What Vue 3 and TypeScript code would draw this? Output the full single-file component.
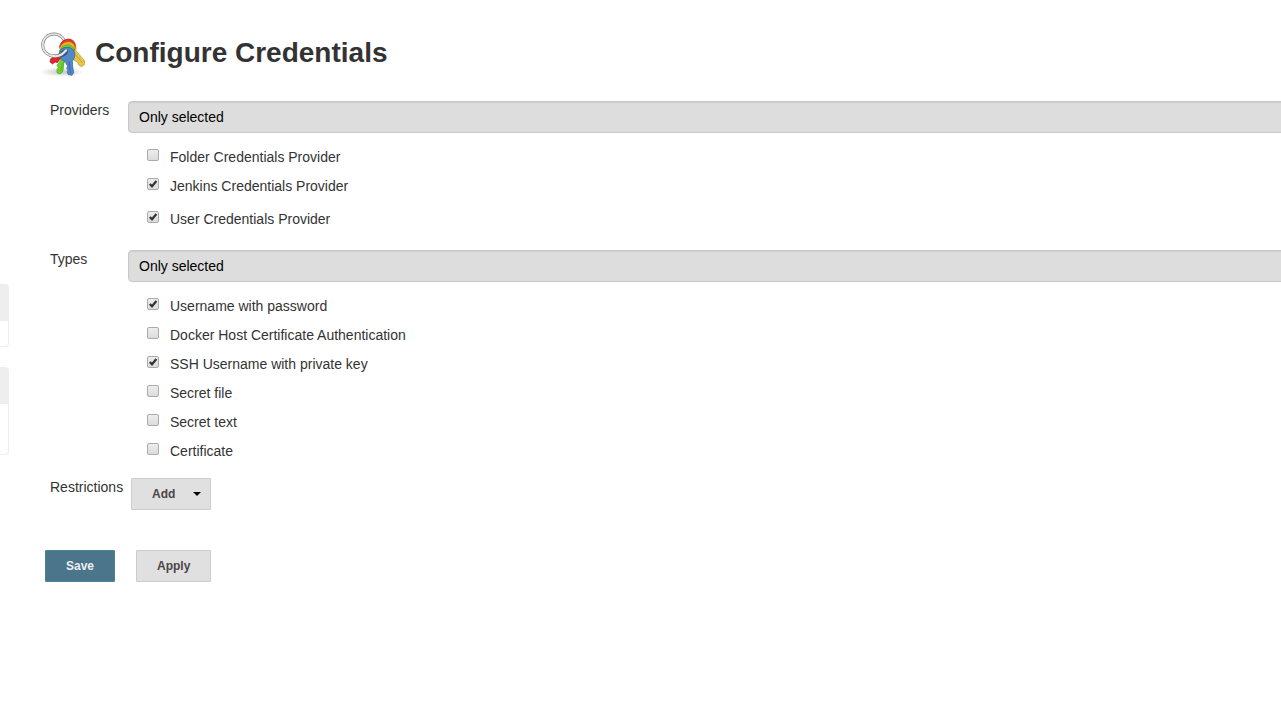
<script setup lang="ts">
import { ref } from 'vue'

interface Option {
  id: string
  label: string
  checked: boolean
  spaced?: boolean
}

interface Group {
  id: string
  title: string
  mode: string
  options: Option[]
}

const groups = ref<Group[]>([
  {
    id: 'providers',
    title: 'Providers',
    mode: 'selected',
    options: [
      { id: 'folder', label: 'Folder Credentials Provider', checked: false },
      { id: 'jenkins', label: 'Jenkins Credentials Provider', checked: true },
      { id: 'user', label: 'User Credentials Provider', checked: true, spaced: true },
    ],
  },
  {
    id: 'types',
    title: 'Types',
    mode: 'selected',
    options: [
      { id: 'password', label: 'Username with password', checked: true },
      { id: 'docker', label: 'Docker Host Certificate Authentication', checked: false },
      { id: 'ssh', label: 'SSH Username with private key', checked: true },
      { id: 'file', label: 'Secret file', checked: false },
      { id: 'text', label: 'Secret text', checked: false },
      { id: 'certificate', label: 'Certificate', checked: false },
    ],
  },
])
</script>

<template>
  <div class="page">
    <aside class="side">
      <div class="pane"><div class="pane-head"></div><div class="pane-body"></div></div>
      <div class="pane"><div class="pane-head"></div><div class="pane-body tall"></div></div>
    </aside>
    <main class="main">
      <header class="heading">
        <svg class="keys" viewBox="15 9 144 144" aria-hidden="true">
          <defs>
            <radialGradient id="shade">
              <stop offset="0" stop-color="#000" stop-opacity=".22" />
              <stop offset="1" stop-color="#000" stop-opacity="0" />
            </radialGradient>
          </defs>
          <ellipse cx="84" cy="138" rx="66" ry="15" fill="url(#shade)" />
          <ellipse cx="60" cy="57" rx="34" ry="33" fill="none" stroke="#808383" stroke-width="9" />
          <ellipse cx="60" cy="57" rx="34" ry="33" fill="none" stroke="#e4e5e5" stroke-width="5" />
          <g stroke-width="2" stroke-linejoin="round">
            <path d="M76 84 L50 98 L48 108 L56 114 L63 108 L70 110 L79 98 L88 90 Z" fill="#e02428" stroke="#b01518" />
            <path d="M80 52 Q101 30 119 44 Q128 56 126 74 L152 105 L151 116 L142 122 L133 116 L131 108 L121 104 L112 86 L96 80 Z" fill="#e5c64b" stroke="#b99426" />
            <path d="M124 86 L145 110" fill="none" stroke="#b98f1c" />
            <path d="M76 62 Q84 38 105 40 Q122 43 124 60 L119 76 L91 91 Z" fill="#e63431" stroke="#c01d20" />
            <path d="M77 67 Q87 46 106 48 Q121 51 123 67 L91 91 Z" fill="#efb72f" stroke="#d29a1b" />
            <path d="M76 76 Q84 56 104 56 Q119 59 121 74 L96 101 L89 113 L87 135 L79 144 L69 140 L69 131 L73 125 L69 118 L77 107 L82 96 Z" fill="#70d035" stroke="#46a012" />
            <path d="M88 109 L79 136" fill="none" stroke="#4da61b" />
            <path d="M77 86 Q76 70 90 65 Q109 60 119 73 Q128 90 115 105 L116 121 L119 140 L114 148 L103 146 L99 138 L102 132 L98 127 L101 120 L96 113 L95 107 Q80 103 77 86 Z" fill="#5288c7" stroke="#285f9c" />
            <path d="M105 106 L110 142" fill="none" stroke="#2c5b96" />
          </g>
          <path d="M78 85 Q82 70 96 69 Q105 72 101 81 Q95 91 79 94 Z" fill="#2d568a" />
          <path d="M49 88 Q69 94 83 85 Q91 79 96 73" fill="none" stroke="#808383" stroke-width="9" stroke-linecap="round" />
          <path d="M48 88 Q69 94 83 85 Q91 79 96 73" fill="none" stroke="#e9eaea" stroke-width="6" stroke-linecap="round" />
        </svg>
        <h1>Configure Credentials</h1>
      </header>

      <form @submit.prevent>
        <section v-for="group in groups" :key="group.id" class="row">
          <label class="name" :for="group.id">{{ group.title }}</label>
          <div class="setting">
            <select :id="group.id" v-model="group.mode">
              <option value="selected">Only selected</option>
            </select>
            <div class="options">
              <label v-for="option in group.options" :key="option.id" class="option" :class="{ spaced: option.spaced }">
                <input v-model="option.checked" type="checkbox" />
                <svg class="tick" viewBox="0 0 12 12" aria-hidden="true">
                  <path d="M2.8 6 L5 8.3 L9.4 3" />
                </svg>
                <span>{{ option.label }}</span>
              </label>
            </div>
          </div>
        </section>
        <section class="row">
          <span class="name">Restrictions</span>
          <button class="button add" type="button">
            Add
            <svg class="caret" viewBox="0 0 8 4" aria-hidden="true"><path d="M0 0 H8 L4 4 Z" /></svg>
          </button>
        </section>
        <div class="actions">
          <button class="button save" type="submit">Save</button>
          <button class="button apply" type="button">Apply</button>
        </div>
      </form>
    </main>
  </div>
</template>

<style>
body {
  margin: 0;
  background: #fff;
}
</style>

<style scoped>
* {
  box-sizing: border-box;
}
.page {
  display: flex;
  min-height: 100vh;
  overflow: hidden;
  color: #333;
  font: 14px/20px "Liberation Sans", Arial, sans-serif;
}
.side {
  display: flex;
  flex: 0 0 9px;
  flex-direction: column;
  gap: 20px;
  padding-top: 284px;
}
.pane {
  border: 1px solid #eee;
  border-left: 0;
  border-radius: 0 4px 4px 0;
}
.pane-head {
  height: 36px;
  background: #eee;
}
.pane-body {
  height: 25px;
}
.pane-body.tall {
  height: 50px;
}
.main {
  flex: 1;
  min-width: 0;
  padding: 29px 0 0 30px;
}
.heading {
  display: flex;
  align-items: center;
  gap: 8px;
  margin-bottom: 24px;
}
.keys {
  width: 48px;
  height: 48px;
}
h1 {
  margin: 0;
  font-size: 28px;
  line-height: 48px;
}
.row {
  display: grid;
  grid-template-columns: 78px 1fr;
  padding-left: 11px;
}
.name {
  white-space: nowrap;
  line-height: 18px;
}
.setting {
  min-width: 0;
}
select {
  display: block;
  width: calc(100% + 12px);
  height: 32px;
  padding: 0 10px;
  border: 1px solid #c8c8c8;
  border-radius: 4px;
  appearance: none;
  background: #ddd;
  box-shadow: inset 0 1px 1px #ccc;
  color: #000;
  font: inherit;
}
.options {
  padding: 9px 0 13px 19px;
}
.option {
  display: flex;
  align-items: center;
  position: relative;
  height: 29px;
  gap: 11px;
}
.spaced {
  height: 37px;
}
input {
  width: 12px;
  height: 12px;
  margin: 0 0 4px;
  border: 1px solid #aaa;
  border-radius: 2px;
  appearance: none;
  background: linear-gradient(#ededed, #dcdcdc);
}
.tick {
  display: none;
  position: absolute;
  left: 0;
  width: 12px;
  height: 12px;
  margin-bottom: 4px;
  overflow: visible;
  pointer-events: none;
}
input:checked + .tick {
  display: block;
}
.tick path {
  fill: none;
  stroke: #333;
  stroke-width: 2.2;
}
.button {
  height: 32px;
  padding: 0 20px;
  border: 1px solid #ccc;
  border-radius: 1px;
  background: #e0e0e0;
  color: #4d4545;
  font: bold 12px/30px "Liberation Sans", Arial, sans-serif;
}
.add {
  display: flex;
  align-items: center;
  justify-content: space-between;
  width: 80px;
  margin-left: 3px;
  padding-right: 9px;
}
.caret {
  width: 8px;
  height: 4px;
}
.actions {
  display: flex;
  gap: 21px;
  margin-top: 40px;
  padding-left: 6px;
}
.save {
  width: 70px;
  border-color: #4b8399;
  background: #4b758b;
  color: #eee;
}
.apply {
  width: 75px;
}
</style>
